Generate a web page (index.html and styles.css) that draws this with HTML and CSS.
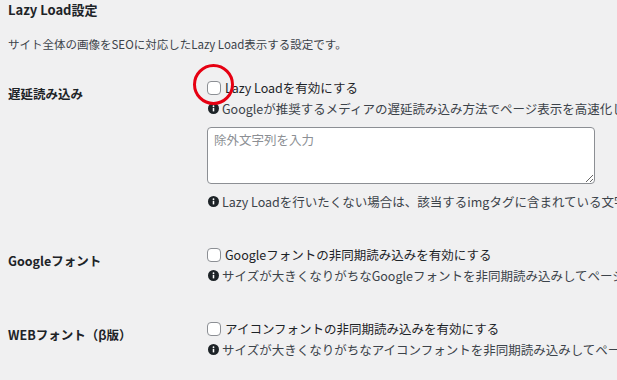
FILE: index.html
```html
<!DOCTYPE html>
<html lang="ja">
<head>
    <meta charset="UTF-8">
    <meta name="viewport" content="width=device-width, initial-scale=1.0">
    <title>Lazy Load設定</title>
    <link rel="stylesheet" href="styles.css">
</head>
<body>
    <div class="wrap">
        <h3 class="section-title">Lazy Load設定</h3>
        <p class="section-desc">サイト全体の画像をSEOに対応したLazy Load表示する設定です。</p>

        <div class="form-table">
            <div class="form-row">
                <div class="form-label">遅延読み込み</div>
                <div class="form-field">
                    <label class="check-line">
                        <span class="check-wrap">
                            <input type="checkbox" name="lazy_load">
                            <span class="highlight"></span>
                        </span>
                        Lazy Loadを有効にする
                    </label>
                    <p class="info">
                        <svg class="info-icon" viewBox="0 0 16 16"><circle cx="8" cy="8" r="8"/><rect x="6.9" y="7" width="2.2" height="5.2" fill="#fff"/><circle cx="8" cy="4.6" r="1.3" fill="#fff"/></svg>
                        Googleが推奨するメディアの遅延読み込み方法でページ表示を高速化します。
                    </p>
                    <textarea class="exclude" placeholder="除外文字列を入力"></textarea>
                    <p class="info">
                        <svg class="info-icon" viewBox="0 0 16 16"><circle cx="8" cy="8" r="8"/><rect x="6.9" y="7" width="2.2" height="5.2" fill="#fff"/><circle cx="8" cy="4.6" r="1.3" fill="#fff"/></svg>
                        Lazy Loadを行いたくない場合は、該当するimgタグに含まれている文字列を入力してください。
                    </p>
                </div>
            </div>

            <div class="form-row">
                <div class="form-label">Googleフォント</div>
                <div class="form-field">
                    <label class="check-line">
                        <span class="check-wrap"><input type="checkbox" name="google_font"></span>
                        Googleフォントの非同期読み込みを有効にする
                    </label>
                    <p class="info">
                        <svg class="info-icon" viewBox="0 0 16 16"><circle cx="8" cy="8" r="8"/><rect x="6.9" y="7" width="2.2" height="5.2" fill="#fff"/><circle cx="8" cy="4.6" r="1.3" fill="#fff"/></svg>
                        サイズが大きくなりがちなGoogleフォントを非同期読み込みしてページ表示を高速化します。
                    </p>
                </div>
            </div>

            <div class="form-row">
                <div class="form-label">WEBフォント（β版）</div>
                <div class="form-field">
                    <label class="check-line">
                        <span class="check-wrap"><input type="checkbox" name="web_font"></span>
                        アイコンフォントの非同期読み込みを有効にする
                    </label>
                    <p class="info">
                        <svg class="info-icon" viewBox="0 0 16 16"><circle cx="8" cy="8" r="8"/><rect x="6.9" y="7" width="2.2" height="5.2" fill="#fff"/><circle cx="8" cy="4.6" r="1.3" fill="#fff"/></svg>
                        サイズが大きくなりがちなアイコンフォントを非同期読み込みしてページ表示を高速化します。
                    </p>
                </div>
            </div>
        </div>
    </div>
</body>
</html>
```

FILE: styles.css
```css
html, body {
    overflow: hidden;
}
body {
    margin: 0;
    padding: 0 8px;
    background-color: #f0f0f1;
    color: #1d2327;
    font-family: "Noto Sans CJK JP", "Noto Sans", sans-serif;
    font-size: 12px;
}
.section-title {
    margin: 0;
    font-size: 13px;
    font-weight: 600;
    line-height: 20px;
}
.section-desc {
    margin: 14px 0 0;
    font-size: 11.5px;
    line-height: 20px;
    color: #3c434a;
    white-space: nowrap;
}
.form-table {
    margin-top: 10px;
}
.form-row {
    display: grid;
    grid-template-columns: 199px 1fr;
    padding: 13px 0 19px;
}
.form-label {
    padding-top: 6px;
    font-size: 12.5px;
    font-weight: 600;
    line-height: 21px;
    white-space: nowrap;
}
.form-field {
    min-width: 0;
}
.check-line {
    display: flex;
    align-items: center;
    gap: 4px;
    font-size: 12.5px;
    line-height: 21px;
    white-space: nowrap;
}
.check-wrap {
    position: relative;
    display: flex;
}
.check-line input[type="checkbox"] {
    appearance: none;
    width: 14px;
    height: 14px;
    margin: 1px 0 0;
    border: 1px solid #8c8f94;
    border-radius: 4px;
    background-color: #fff;
}
.highlight {
    position: absolute;
    left: -14px;
    top: -16px;
    width: 35px;
    height: 35px;
    border: 3px solid #e60012;
    border-radius: 50%;
}
.info {
    display: flex;
    align-items: center;
    gap: 3px;
    margin: 0;
    font-size: 12.5px;
    line-height: 21px;
    color: #3c434a;
    white-space: nowrap;
}
.info-icon {
    flex: none;
    width: 11px;
    height: 11px;
    margin-left: 1px;
    fill: #1d2327;
}
.exclude {
    display: block;
    box-sizing: border-box;
    width: 388px;
    height: 57px;
    margin: 8px 0 7px;
    padding: 3px 6px;
    border: 1px solid #8c8f94;
    border-radius: 4px;
    background-color: #fff;
    font-family: inherit;
    font-size: 12.5px;
    line-height: 18px;
    color: #2c3338;
}
.exclude::placeholder {
    color: #8c8f94;
}
```
